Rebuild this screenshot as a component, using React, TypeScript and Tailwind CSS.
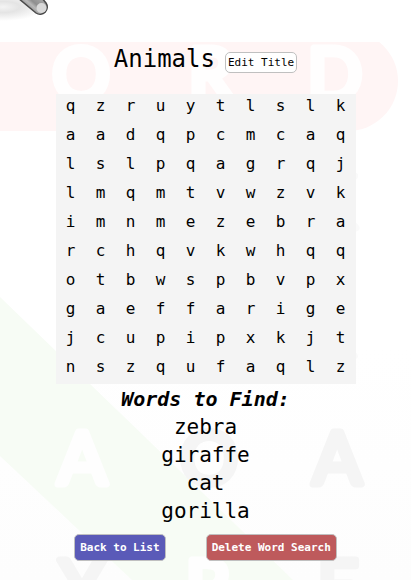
const rows = [
  "qzruytlslk",
  "aadqpcmcaq",
  "lslpqagrqj",
  "lmqmtvwzvk",
  "imnmezebra",
  "rchqvkwhqq",
  "otbwspbvpx",
  "gaeffarige",
  "jcupipxkjt",
  "nszqufaqlz",
];

const words = ["zebra", "giraffe", "cat", "gorilla"];

const backdropLetters = [
  { char: "O", x: 81, y: 100, color: "#fffefe" },
  { char: "R", x: 211, y: 100, color: "#fffefe" },
  { char: "D", x: 335, y: 100, color: "#fffefe" },
  { char: "K", x: 332, y: 228, color: "#fafafa" },
  { char: "R", x: 332, y: 356, color: "#fafafa" },
  { char: "A", x: 82, y: 484, color: "#fefefe" },
  { char: "O", x: 209, y: 484, color: "#f5f5f5" },
  { char: "A", x: 337, y: 484, color: "#f5f5f5" },
  { char: "Y", x: 82, y: 612, color: "#f5f5f5" },
  { char: "R", x: 208, y: 612, color: "#fefefe" },
  { char: "E", x: 338, y: 612, color: "#f5f5f5" },
];

function Backdrop() {
  return (
    <svg
      className="absolute inset-0 -z-10 h-full w-full"
      viewBox="0 0 411 580"
      preserveAspectRatio="xMidYMin slice"
      aria-hidden="true"
    >
      <defs>
        <linearGradient id="paper" x1="0" y1="0" x2="0" y2="1">
          <stop offset="0.6" stopColor="#ffffff" />
          <stop offset="1" stopColor="#fdfdfd" />
        </linearGradient>
      </defs>
      <rect width="411" height="580" fill="url(#paper)" />
      <rect x="-60" y="31" width="458" height="100" rx="50" fill="#fff5f5" />
      <path d="M0 297 L293 580 H132 L0 456 Z" fill="#f7fcf5" />
      {backdropLetters.map((l) => (
        <text
          key={`${l.x}-${l.y}`}
          x={l.x}
          y={l.y}
          textAnchor="middle"
          className="font-['Lato',sans-serif]"
          fontSize="72"
          fill={l.color}
          stroke={l.color}
          strokeWidth="7"
          strokeLinejoin="round"
        >
          {l.char}
        </text>
      ))}
    </svg>
  );
}

function Pencil() {
  return (
    <svg className="block" width="64" height="42" viewBox="0 0 64 42" aria-hidden="true">
      <defs>
        <radialGradient id="shade">
          <stop offset="0" stopColor="#f4f4f4" />
          <stop offset="0.4" stopColor="#e4e4e4" />
          <stop offset="1" stopColor="#ffffff" />
        </radialGradient>
        <linearGradient id="barrel" gradientUnits="userSpaceOnUse" x1="26" y1="8" x2="37" y2="-5">
          <stop offset="0" stopColor="#8a8a8a" />
          <stop offset="0.35" stopColor="#b8b8b8" />
          <stop offset="0.55" stopColor="#8f8f8f" />
          <stop offset="1" stopColor="#a8a8a8" />
        </linearGradient>
      </defs>
      <ellipse cx="3" cy="7" rx="42" ry="14" fill="url(#shade)" />
      <path
        d="M18 -2 L36 13 A7.2 7.2 0 0 0 46 3 L41 -3 Z"
        fill="url(#barrel)"
        stroke="#4a4a4a"
        strokeWidth="1.5"
      />
      <circle cx="41.5" cy="8" r="5" fill="#d9d9d9" />
    </svg>
  );
}

export default function App() {
  return (
    <div className="relative isolate min-h-screen overflow-hidden pb-[18px] font-['DejaVu_Sans_Mono','Liberation_Mono',monospace] text-black">
      <Backdrop />
      <header className="h-[42px] bg-white">
        <Pencil />
      </header>
      <main className="flex flex-col items-center">
        <div className="flex h-[52px] items-start justify-center gap-[10px]">
          <h1 className="text-2xl leading-[34px]">Animals</h1>
          <button
            type="button"
            className="mt-[10px] h-[21px] rounded-[5px] border border-[#c0c0c0] bg-white px-[2px] text-[11px] leading-[19px]"
          >
            Edit Title
          </button>
        </div>
        <table className="border-collapse bg-[#f4f4f4] text-center text-base leading-6">
          <tbody>
            {rows.map((row) => (
              <tr key={row} className="h-[29px]">
                {row.split("").map((letter, i) => (
                  <td key={i} className="w-[30px] p-0 pb-[5px]">
                    {letter}
                  </td>
                ))}
              </tr>
            ))}
          </tbody>
        </table>
        <h2 className="mt-px text-xl leading-[28px] font-bold italic">Words to Find:</h2>
        <ul className="text-center text-[21px] leading-[28px]">
          {words.map((word) => (
            <li key={word}>{word}</li>
          ))}
        </ul>
        <div className="mt-[9px] flex gap-10 text-[11px] leading-[25px] font-bold text-white">
          <button type="button" className="rounded-[5px] border border-[#c0c0c0] bg-[#5a5ab8] px-[5px]">
            Back to List
          </button>
          <button type="button" className="rounded-[5px] border border-[#c0c0c0] bg-[#be5a5c] px-[5px]">
            Delete Word Search
          </button>
        </div>
      </main>
    </div>
  );
}
